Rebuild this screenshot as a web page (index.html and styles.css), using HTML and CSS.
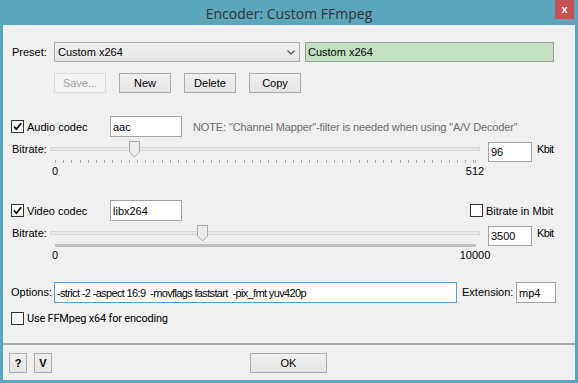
FILE: index.html
```html
<!DOCTYPE html>
<html lang="en">
<head>
<meta charset="UTF-8">
<title>Encoder: Custom FFmpeg</title>
<meta name="viewport" content="width=device-width, initial-scale=1.0">
<link rel="stylesheet" href="styles.css">
</head>
<body>

<div class="window">
  <div class="titlebar">
    <span class="title">Encoder: Custom FFmpeg</span>
    <button class="close">x</button>
  </div>

  <div class="client">
    <div class="row preset-row">
      <span class="lbl preset-lbl">Preset:</span>
      <div class="combo">
        <span>Custom x264</span>
        <svg width="8" height="5" viewBox="0 0 8 5"><path d="M0.5 0.5 L4 4 L7.5 0.5" fill="none" stroke="#5a5a5a" stroke-width="1.3"/></svg>
      </div>
      <input class="text name" value="Custom x264">
    </div>

    <div class="row btn-row">
      <button class="btn" disabled>Save...</button>
      <button class="btn">New</button>
      <button class="btn">Delete</button>
      <button class="btn">Copy</button>
    </div>

    <!-- audio -->
    <div class="row codec-row audio-row">
      <label class="check">
        <span class="box"><svg width="9" height="9" viewBox="0 0 9 9"><path d="M1 4.6 L3.4 7.2 L8.2 1.2" fill="none" stroke="#000" stroke-width="1.7"/></svg></span>
        Audio codec
      </label>
      <input class="text codec" value="aac">
      <span class="note">NOTE: "Channel Mapper"-filter is needed when using "A/V Decoder"</span>
    </div>

    <div class="row slider-row">
      <span class="lbl rate-lbl">Bitrate:</span>
      <div class="slider">
        <div class="track"></div>
        <svg class="thumb" style="left: 78.75px" width="11" height="17" viewBox="0 0 11 17"><path d="M0.5 0.5 H10.5 V11 L5.5 16 L0.5 11 Z" fill="#ececec" stroke="#a9a9a9"/></svg>
        <div class="ticks ticks-sparse"></div>
      </div>
      <input class="text rate" value="96">
      <span class="unit">Kbit</span>
    </div>
    <div class="scale"><span class="min">0</span><span class="max">512</span></div>

    <!-- video -->
    <div class="row codec-row video-row">
      <label class="check">
        <span class="box"><svg width="9" height="9" viewBox="0 0 9 9"><path d="M1 4.6 L3.4 7.2 L8.2 1.2" fill="none" stroke="#000" stroke-width="1.7"/></svg></span>
        Video codec
      </label>
      <input class="text codec" value="libx264">
      <label class="check mbit">
        <span class="box"></span>
        Bitrate in Mbit
      </label>
    </div>

    <div class="row slider-row">
      <span class="lbl rate-lbl">Bitrate:</span>
      <div class="slider">
        <div class="track"></div>
        <svg class="thumb" style="left: 147px" width="11" height="17" viewBox="0 0 11 17"><path d="M0.5 0.5 H10.5 V11 L5.5 16 L0.5 11 Z" fill="#ececec" stroke="#a9a9a9"/></svg>
        <div class="ticks ticks-dense"></div>
      </div>
      <input class="text rate" value="3500">
      <span class="unit">Kbit</span>
    </div>
    <div class="scale"><span class="min">0</span><span class="max">10000</span></div>

    <div class="row options-row">
      <span class="lbl opt-lbl">Options:</span>
      <input class="text options" value="-strict -2 -aspect 16:9  -movflags faststart  -pix_fmt yuv420p">
      <span class="lbl ext-lbl">Extension:</span>
      <input class="text ext" value="mp4">
    </div>

    <div class="row x64-row">
      <label class="check x64">
        <span class="box"></span>
        Use FFMpeg x64 for encoding
      </label>
    </div>

    <div class="separator"></div>

    <div class="row footer">
      <button class="btn small">?</button>
      <button class="btn small">V</button>
      <button class="btn ok">OK</button>
    </div>
  </div>
</div>

</body>
</html>
```

FILE: styles.css
```css
* {
  box-sizing: border-box;
}

body {
  margin: 0;
  width: 578px;
  height: 383px;
  overflow: hidden;
  background-color: #5aa7bc;
  font-family: "Liberation Sans", Arial, sans-serif;
  font-size: 11px;
  color: #000;
}

.window {
  display: flex;
  flex-direction: column;
  height: 383px;
  padding: 0 3px 3px;
}

.titlebar {
  height: 25px;
  flex: none;
  display: grid;
  grid-template-columns: 1fr auto 1fr;
  align-items: start;
}

.title {
  grid-column: 2;
  font-family: "Open Sans", sans-serif;
  font-size: 14px;
  line-height: 27px;
  color: #333;
}

.close {
  grid-column: 3;
  justify-self: end;
  width: 19px;
  height: 19px;
  margin-right: 1px;
  padding: 0 0 2px;
  border: none;
  background-color: #c75050;
  color: #fff;
  font: bold 11px "Liberation Sans", Arial, sans-serif;
}

.client {
  flex: 1;
  display: flex;
  flex-direction: column;
  background-color: #f0f0f0;
}

.row {
  display: flex;
  align-items: center;
  flex: none;
}

.lbl {
  line-height: 13px;
  white-space: nowrap;
}

/* inputs */
.text {
  height: 21px;
  margin: 0;
  padding: 0 2px;
  border: 1px solid #a3a3a3;
  background: #fff;
  font: 11px "Liberation Sans", Arial, sans-serif;
  color: #000;
  outline: none;
}

.btn {
  height: 20px;
  margin: 0;
  padding: 0;
  border: 1px solid #acacac;
  background: linear-gradient(#f0f0f0, #e5e5e5);
  font: 11px "Liberation Sans", Arial, sans-serif;
  color: #000;
}

.btn:disabled {
  border-color: #d9d9d9;
  background: #f4f4f4;
  color: #a0a0a0;
}

/* preset */
.preset-row {
  margin-top: 17px;
  height: 20px;
  padding-left: 9px;
}

.preset-lbl {
  width: 42px;
}

.combo {
  width: 246px;
  height: 20px;
  display: flex;
  align-items: center;
  justify-content: space-between;
  padding: 0 4px 0 3px;
  border: 1px solid #acacac;
  background: linear-gradient(#f0f0f0, #e5e5e5);
}

.text.name {
  width: 249px;
  height: 20px;
  margin-left: 5px;
  background: #c2dfc2;
  border-color: #a0a0a0;
}

.btn-row {
  margin-top: 11px;
  padding-left: 51px;
  gap: 13px;
}

.btn-row .btn {
  width: 52px;
}

/* codec rows */
.codec-row {
  height: 21px;
  padding-left: 8px;
}

.audio-row {
  margin-top: 23px;
}

.video-row {
  margin-top: 22px;
}

.check {
  display: flex;
  align-items: center;
  gap: 3px;
  white-space: nowrap;
}

.codec-row .check {
  width: 99px;
}

.box {
  width: 13px;
  height: 13px;
  flex: none;
  display: flex;
  align-items: center;
  justify-content: center;
  border: 1px solid #333;
  background: #fff;
}

.text.codec {
  width: 72px;
}

.note {
  margin-left: 11px;
  color: #6d6d6d;
  white-space: nowrap;
  letter-spacing: -0.13px;
}

.codec-row .check.mbit {
  width: auto;
  margin-left: 288px;
}

/* sliders */
.slider-row {
  margin-top: 4px;
  height: 22px;
  align-items: flex-start;
  padding-left: 9px;
}

.rate-lbl {
  width: 38px;
  margin-top: 2px;
}

.slider {
  position: relative;
  width: 430px;
  height: 22px;
}

.track {
  position: absolute;
  left: 0;
  right: 0;
  top: 6px;
  height: 4px;
  border: 1px solid #d6d6d6;
  background: #e7e9e9;
}

.thumb {
  position: absolute;
  top: 0;
}

.ticks {
  position: absolute;
  left: 5px;
  top: 19px;
  width: 421px;
  height: 3px;
}

.ticks-sparse {
  background: repeating-linear-gradient(to right, #a6a6a6 0 1px, transparent 1px 8.203px);
  border-right: 1px solid #a6a6a6;
}

.ticks-dense {
  background: #c2c2c2;
}

.text.rate {
  width: 44px;
  height: 20px;
  margin-top: 1px;
  margin-left: 8px;
}

.unit {
  margin-top: 2px;
  margin-left: 5px;
  line-height: 13px;
  letter-spacing: -0.6px;
}

.scale {
  position: relative;
  flex: none;
  width: 420px;
  height: 13px;
  margin-top: 2px;
  margin-left: 52px;
  line-height: 13px;
}

.scale span {
  position: absolute;
  top: 0;
  transform: translateX(-50%);
}

.scale .min {
  left: 0;
}

.scale .max {
  left: 100%;
}

/* options */
.options-row {
  margin-top: 20px;
  height: 21px;
  padding-left: 8px;
}

.opt-lbl {
  width: 43px;
}

.text.options {
  width: 403px;
  border-color: #569de5;
  letter-spacing: -0.65px;
}

.ext-lbl {
  width: 54px;
  margin-left: 5px;
}

.text.ext {
  width: 40px;
}

.x64-row {
  margin-top: 9px;
  height: 13px;
  padding-left: 8px;
}

.check.x64 {
  font-family: Roboto, sans-serif;
  font-size: 11px;
  letter-spacing: -0.2px;
}

.separator {
  flex: none;
  height: 2px;
  margin-top: 18px;
  background-color: #a9a9a9;
}

/* bottom buttons */
.footer {
  margin-top: 8px;
  padding-left: 6px;
}

.btn.small {
  width: 18px;
  font-weight: bold;
  margin-right: 7px;
}

.btn.ok {
  width: 77px;
  margin-left: 191px;
}
```
